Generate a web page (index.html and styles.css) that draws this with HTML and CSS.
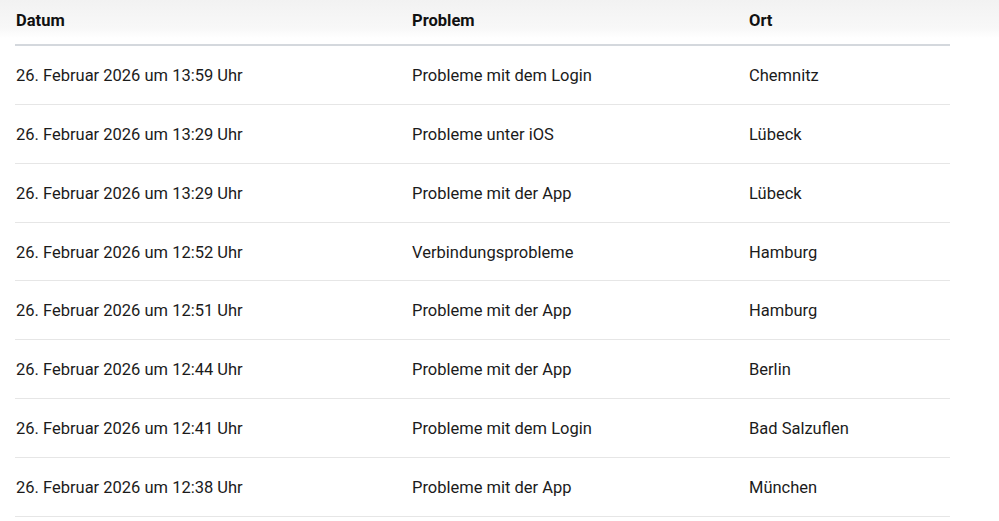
FILE: index.html
```html
<!DOCTYPE html>
<html lang="de">
<head>
<meta charset="utf-8">
<link rel="stylesheet" href="styles.css">
</head>
<body>
<div class="page">
<table class="reports">
  <colgroup>
    <col class="c-date">
    <col class="c-prob">
    <col class="c-ort">
  </colgroup>
  <thead>
    <tr><th>Datum</th><th>Problem</th><th>Ort</th></tr>
  </thead>
  <tbody>
    <tr><td>26. Februar 2026 um 13:59 Uhr</td><td>Probleme mit dem Login</td><td>Chemnitz</td></tr>
    <tr><td>26. Februar 2026 um 13:29 Uhr</td><td>Probleme unter iOS</td><td>Lübeck</td></tr>
    <tr><td>26. Februar 2026 um 13:29 Uhr</td><td>Probleme mit der App</td><td>Lübeck</td></tr>
    <tr><td>26. Februar 2026 um 12:52 Uhr</td><td>Verbindungsprobleme</td><td>Hamburg</td></tr>
    <tr><td>26. Februar 2026 um 12:51 Uhr</td><td>Probleme mit der App</td><td>Hamburg</td></tr>
    <tr><td>26. Februar 2026 um 12:44 Uhr</td><td>Probleme mit der App</td><td>Berlin</td></tr>
    <tr><td>26. Februar 2026 um 12:41 Uhr</td><td>Probleme mit dem Login</td><td>Bad Salzuflen</td></tr>
    <tr><td>26. Februar 2026 um 12:38 Uhr</td><td>Probleme mit der App</td><td>München</td></tr>
  </tbody>
</table>
</div>
</body>
</html>
```
FILE: styles.css
```css
html, body {
  margin: 0;
  padding: 0;
  background: #fff;
}
body {
  font-family: Roboto, "Liberation Sans", Arial, sans-serif;
  color: #1b1b1b;
  background: linear-gradient(#f2f2f2 0, #f8f8f8 28px, #ffffff 38px) no-repeat;
  background-size: 100% 38px;
  height: 521px;
  overflow: hidden;
}
.page {
  padding-left: 15px;
}
.reports {
  width: 935px;
  border-collapse: collapse;
  table-layout: fixed;
}
.c-date { width: 396px; }
.c-prob { width: 337px; }
.c-ort { width: 202px; }
.reports th {
  text-align: left;
  font-weight: 700;
  font-size: 16.5px;
  line-height: 19px;
  padding: 11px 0 14px 1px;
  border-bottom: 2px solid #d4d8dd;
  color: #111;
}
.reports td {
  font-size: 16.5px;
  line-height: 18.86px;
  padding: 21px 0 18px 1px;
  border-bottom: 1px solid #e6e6e6;
}
```
